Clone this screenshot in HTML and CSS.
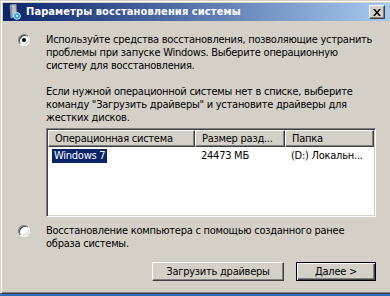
FILE: index.html
```html
<!DOCTYPE html>
<html lang="ru">
<head>
<meta charset="utf-8">
<title>Параметры восстановления системы</title>
<link rel="stylesheet" href="styles.css">
</head>
<body>
<div class="window">
  <div class="titlebar">
    <svg class="app-icon" width="16" height="16" viewBox="0 0 16 16">
      <path d="M4 1 L10 0 L11 12 L5 14 Z" fill="#b9bfc6" stroke="#7d8590" stroke-width="0.8"/>
      <path d="M4 1 L6 2 L6.5 14.2 L5 14 Z" fill="#8d949c"/>
      <circle cx="11" cy="12" r="3.4" fill="#1e9fe6" stroke="#e8f6ff" stroke-width="0.8"/>
      <circle cx="11" cy="12" r="1.3" fill="#bfe9ff"/>
    </svg>
    <span class="title">Параметры восстановления системы</span>
    <button class="close" type="button" aria-label="Закрыть">
      <svg width="8" height="7" viewBox="0 0 8 7"><path d="M0 0h2l2 2.5L6 0h2L5 3.5 8 7H6L4 4.5 2 7H0l3-3.5z" fill="#000"/></svg>
    </button>
  </div>

  <div class="content">
    <div class="option">
      <span class="radio checked"></span>
      <div class="option-text">
        <p>Используйте средства восстановления, позволяющие устранить проблемы при запуске Windows. Выберите операционную систему для восстановления.</p>
        <p class="gap">Если нужной операционной системы нет в списке, выберите команду "Загрузить драйверы" и установите драйверы для жестких дисков.</p>
        <div class="listview">
          <div class="lv-header">
            <div class="lv-col c1">Операционная система</div>
            <div class="lv-col c2">Размер разд...</div>
            <div class="lv-col c3">Папка</div>
          </div>
          <div class="lv-row">
            <div class="lv-cell c1"><span class="selected">Windows 7</span></div>
            <div class="lv-cell c2">24473 МБ</div>
            <div class="lv-cell c3">(D:) Локальн...</div>
          </div>
        </div>
      </div>
    </div>

    <div class="option second">
      <span class="radio"></span>
      <div class="option-text">
        <p>Восстановление компьютера с помощью созданного ранее образа системы.</p>
      </div>
    </div>

    <div class="buttons">
      <button class="btn" type="button">Загрузить драйверы</button>
      <button class="btn default" type="button">Далее &gt;</button>
    </div>
  </div>
</div>
</body>
</html>
```

FILE: styles.css
```css
html, body {
  margin: 0;
  padding: 0;
}
body {
  width: 390px;
  height: 296px;
  background: #2d6fb8;
  overflow: hidden;
  font-family: "DejaVu Sans Condensed", "DejaVu Sans", sans-serif;
  font-stretch: condensed;
  font-size: 11px;
  letter-spacing: -0.25px;
  color: #000;
}
.window {
  box-sizing: border-box;
  width: 392px;
  height: 294px;
  background: #d4d0c8;
  border-top: 1px solid #d4d0c8;
  border-left: 1px solid #d4d0c8;
  border-bottom: 1px solid #404040;
  box-shadow: inset 1px 1px #fff, inset 0 -1px #808080;
  padding: 2px 0 0 2px;
}
.titlebar {
  height: 18px;
  display: flex;
  align-items: center;
  background: linear-gradient(to right, #0a246a, #a6caf0);
  color: #fff;
  padding: 0 5px 0 3px;
  margin-right: 2px;
}
.app-icon {
  flex: none;
  margin-right: 4px;
}
.title {
  flex: 1;
  font-weight: bold;
  font-size: 11px;
  letter-spacing: 0.1px;
  line-height: 18px;
  white-space: nowrap;
}
.close {
  box-sizing: border-box;
  width: 16px;
  height: 14px;
  padding: 0;
  display: flex;
  align-items: center;
  justify-content: center;
  background: #d4d0c8;
  border: 1px solid;
  border-color: #fff #404040 #404040 #fff;
  box-shadow: inset -1px -1px #808080;
}
.content {
  padding: 12px 0 0 15px;
}
.option {
  display: grid;
  grid-template-columns: 28px 1fr;
  align-items: start;
}
.option-text {
  width: 335px;
}
.option p {
  margin: 0;
  line-height: 13px;
}
.option p.gap {
  margin-top: 13px;
}
.radio {
  box-sizing: border-box;
  width: 12px;
  height: 12px;
  margin-top: 1px;
  border-radius: 50%;
  background: #fff;
  border: 1px solid;
  border-color: #808080 #fff #fff #808080;
  box-shadow: inset 1px 1px #404040, inset -1px -1px #d4d0c8;
  position: relative;
}
.radio.checked::after {
  content: "";
  position: absolute;
  left: 3px;
  top: 3px;
  width: 4px;
  height: 4px;
  border-radius: 50%;
  background: #000;
}
.listview {
  box-sizing: border-box;
  margin-top: 4px;
  width: 330px;
  height: 89px;
  background: #fff;
  border: 1px solid;
  border-color: #808080 #fff #fff #808080;
  box-shadow: inset 1px 1px #404040, inset -1px -1px #d4d0c8;
  padding: 1px;
}
.lv-header {
  display: flex;
  height: 17px;
}
.lv-col {
  box-sizing: border-box;
  background: #d4d0c8;
  border: 1px solid;
  border-color: #fff #404040 #404040 #fff;
  box-shadow: inset -1px -1px #808080;
  padding: 0 6px;
  line-height: 15px;
  white-space: nowrap;
  overflow: hidden;
}
.c1 { width: 147px; }
.c2 { width: 90px; }
.c3 { width: 89px; }
.lv-row {
  display: flex;
  margin-top: 2px;
  height: 14px;
  line-height: 14px;
}
.lv-cell {
  box-sizing: border-box;
  padding: 0 0 0 6px;
  white-space: nowrap;
  overflow: hidden;
}
.lv-cell.c1 {
  padding-left: 4px;
}
.selected {
  display: inline-block;
  background: #0a246a;
  color: #fff;
  padding: 0 2px;
}
.option.second {
  margin-top: 7px;
}
.buttons {
  display: flex;
  justify-content: flex-end;
  gap: 12px;
  margin-top: 12px;
  width: 358px;
}
.btn {
  box-sizing: border-box;
  height: 19px;
  padding: 0;
  font: inherit;
  letter-spacing: inherit;
  color: #000;
  background: #d4d0c8;
  border: 1px solid;
  border-color: #fff #404040 #404040 #fff;
  box-shadow: inset -1px -1px #808080;
  width: 132px;
}
.btn.default {
  width: 80px;
  border-color: #000;
  box-shadow: inset 1px 1px #fff, inset -1px -1px #404040, inset -2px -2px #808080;
}
```
